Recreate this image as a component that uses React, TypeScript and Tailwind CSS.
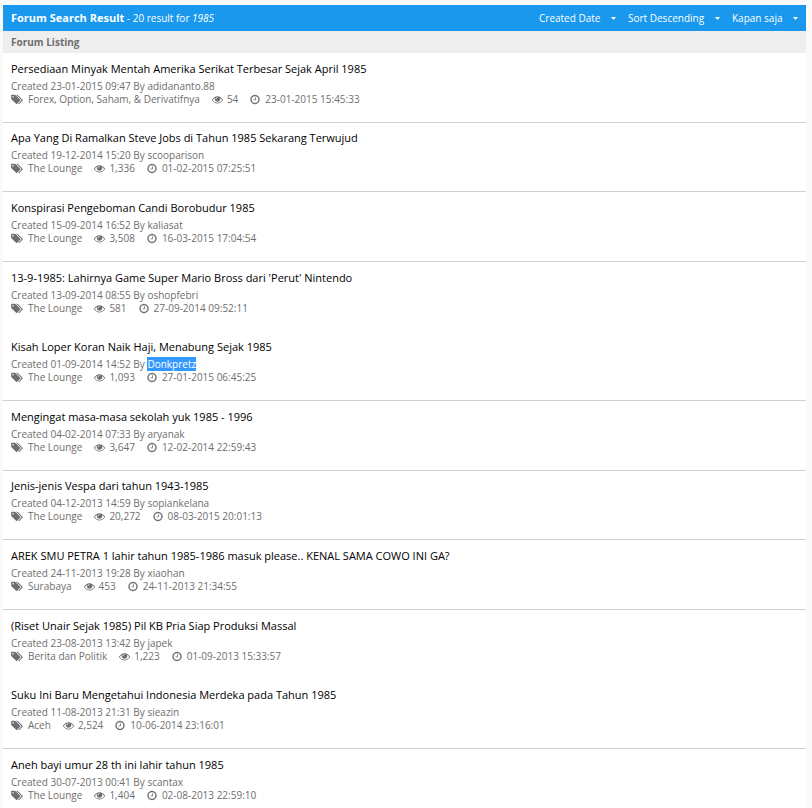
import { useState } from "react";

interface Thread {
  title: string;
  created: string;
  author: string;
  forum: string;
  views: string;
  lastPost: string;
}

const THREADS: Thread[] = [
  { title: "Persediaan Minyak Mentah Amerika Serikat Terbesar Sejak April 1985", created: "23-01-2015 09:47", author: "adidananto.88", forum: "Forex, Option, Saham, & Derivatifnya", views: "54", lastPost: "23-01-2015 15:45:33" },
  { title: "Apa Yang Di Ramalkan Steve Jobs di Tahun 1985 Sekarang Terwujud", created: "19-12-2014 15:20", author: "scooparison", forum: "The Lounge", views: "1,336", lastPost: "01-02-2015 07:25:51" },
  { title: "Konspirasi Pengeboman Candi Borobudur 1985", created: "15-09-2014 16:52", author: "kaliasat", forum: "The Lounge", views: "3,508", lastPost: "16-03-2015 17:04:54" },
  { title: "13-9-1985: Lahirnya Game Super Mario Bross dari 'Perut' Nintendo", created: "13-09-2014 08:55", author: "oshopfebri", forum: "The Lounge", views: "581", lastPost: "27-09-2014 09:52:11" },
  { title: "Kisah Loper Koran Naik Haji, Menabung Sejak 1985", created: "01-09-2014 14:52", author: "Donkpretz", forum: "The Lounge", views: "1,093", lastPost: "27-01-2015 06:45:25" },
  { title: "Mengingat masa-masa sekolah yuk 1985 - 1996", created: "04-02-2014 07:33", author: "aryanak", forum: "The Lounge", views: "3,647", lastPost: "12-02-2014 22:59:43" },
  { title: "Jenis-jenis Vespa dari tahun 1943-1985", created: "04-12-2013 14:59", author: "sopiankelana", forum: "The Lounge", views: "20,272", lastPost: "08-03-2015 20:01:13" },
  { title: "AREK SMU PETRA 1 lahir tahun 1985-1986 masuk please.. KENAL SAMA COWO INI GA?", created: "24-11-2013 19:28", author: "xiaohan", forum: "Surabaya", views: "453", lastPost: "24-11-2013 21:34:55" },
  { title: "(Riset Unair Sejak 1985) Pil KB Pria Siap Produksi Massal", created: "23-08-2013 13:42", author: "japek", forum: "Berita dan Politik", views: "1,223", lastPost: "01-09-2013 15:33:57" },
  { title: "Suku Ini Baru Mengetahui Indonesia Merdeka pada Tahun 1985", created: "11-08-2013 21:31", author: "sieazin", forum: "Aceh", views: "2,524", lastPost: "10-06-2014 23:16:01" },
  { title: "Aneh bayi umur 28 th ini lahir tahun 1985", created: "30-07-2013 00:41", author: "scantax", forum: "The Lounge", views: "1,404", lastPost: "02-08-2013 22:59:10" },
];

const HIGHLIGHTED_AUTHOR = "Donkpretz";
// threads that run into the next one without a rule
const NO_RULE = [3, 8];

function TagsIcon() {
  return (
    <svg viewBox="0 0 1920 1792" className="h-[11px] w-3 shrink-0" fill="currentColor" aria-hidden="true">
      <path
        transform="translate(0 1536) scale(1 -1)"
        d="M448 1088q0 53 -37.5 90.5t-90.5 37.5t-90.5 -37.5t-37.5 -90.5t37.5 -90.5t90.5 -37.5t90.5 37.5t37.5 90.5zM1515 512q0 -53 -37 -90l-491 -492q-39 -37 -91 -37q-53 0 -90 37l-715 716q-38 37 -64.5 101t-26.5 117v416q0 52 38 90t90 38h416q53 0 117 -26.5t102 -64.5l715 -714q37 -39 37 -91zM1899 512q0 -53 -37 -90l-491 -492q-39 -37 -91 -37q-36 0 -59 14t-53 45l470 470q37 37 37 90q0 52 -37 91l-715 714q-38 38 -102 64.5t-117 26.5h224q53 0 117 -26.5t102 -64.5l715 -714q37 -39 37 -91z"
      />
    </svg>
  );
}

function EyeIcon() {
  return (
    <svg viewBox="0 0 1792 1792" className="size-[11px] shrink-0" fill="currentColor" aria-hidden="true">
      <path
        transform="translate(0 1536) scale(1 -1)"
        d="M1664 576q-152 236 -381 353q61 -104 61 -225q0 -185 -131.5 -316.5t-316.5 -131.5t-316.5 131.5t-131.5 316.5q0 121 61 225q-229 -117 -381 -353q133 -205 333.5 -326.5t434.5 -121.5t434.5 121.5t333.5 326.5zM944 960q0 20 -14 34t-34 14q-125 0 -214.5 -89.5t-89.5 -214.5q0 -20 14 -34t34 -14t34 14t14 34q0 86 61 147t147 61q20 0 34 14t14 34zM1792 576q0 -34 -20 -69q-140 -230 -376.5 -368.5t-499.5 -138.5t-499.5 139t-376.5 368q-20 35 -20 69t20 69q140 229 376.5 368t499.5 139t499.5 -139t376.5 -368q20 -35 20 -69z"
      />
    </svg>
  );
}

function ClockIcon() {
  return (
    <svg viewBox="0 0 1536 1792" className="h-[11px] w-[10px] shrink-0" fill="currentColor" aria-hidden="true">
      <path
        transform="translate(0 1536) scale(1 -1)"
        d="M896 992v-448q0 -14 -9 -23t-23 -9h-320q-14 0 -23 9t-9 23v64q0 14 9 23t23 9h224v352q0 14 9 23t23 9h64q14 0 23 -9t9 -23zM1312 640q0 148 -73 273t-198 198t-273 73t-273 -73t-198 -198t-73 -273t73 -273t198 -198t273 -73t273 73t198 198t73 273zM1536 640q0 -209 -103 -385.5t-279.5 -279.5t-385.5 -103t-385.5 103t-279.5 279.5t-103 385.5t103 385.5t279.5 279.5t385.5 103t385.5 -103t279.5 -279.5t103 -385.5z"
      />
    </svg>
  );
}

function FilterSelect({ label, options }: { label: string; options: string[] }) {
  const [value, setValue] = useState(options[0]);

  return (
    <div className="flex items-center gap-2.5">
      <select
        aria-label={label}
        value={value}
        onChange={(e) => setValue(e.target.value)}
        className="cursor-pointer appearance-none bg-transparent text-[10px] leading-4 text-white focus:outline-none"
      >
        {options.map((option) => (
          <option key={option}>{option}</option>
        ))}
      </select>
      <svg viewBox="0 0 5 3" className="h-[3px] w-[5px]" fill="white" aria-hidden="true">
        <path d="M0 0h5L2.5 3z" />
      </svg>
    </div>
  );
}

function ThreadRow({ thread, ruled }: { thread: Thread; ruled: boolean }) {
  const highlighted = thread.author === HIGHLIGHTED_AUTHOR;

  return (
    <li
      className={
        ruled
          ? "border-b border-[#d0d0d0] px-2 pt-2 pb-4 nth-[5n+2]:pt-[7px]"
          : "px-2 pt-2 pb-4"
      }
    >
      <a href="#" className="block text-[11px] leading-4 text-black hover:underline">
        {thread.title}
      </a>
      <p className="pt-0.5 text-[10px] leading-[14px]">
        Created {thread.created} By{" "}
        <a href="#" className={highlighted ? "bg-[#3399ff] text-white" : "hover:underline"}>
          {thread.author}
        </a>
      </p>
      <div className="flex items-center text-[10px] leading-[13px]">
        <TagsIcon />
        <a href="#" className="ml-[5px] hover:underline">
          {thread.forum}
        </a>
        <span className="ml-3 flex items-center gap-1">
          <EyeIcon />
          {thread.views}
        </span>
        <span className="ml-3 flex items-center gap-[5px]">
          <ClockIcon />
          {thread.lastPost}
        </span>
      </div>
    </li>
  );
}

export default function App() {
  return (
    <div className="min-h-screen bg-[#fafafa] pt-[5px] pr-1.5 pl-[3px] font-['Open_Sans',sans-serif] text-[#6e6e6e]">
      <main className="bg-white">
        <header className="flex h-[26px] items-center justify-between bg-[#1998ed] px-2 text-white">
          <h1 className="text-[10px] leading-4">
            <strong className="text-[11px] font-bold">Forum Search Result</strong> - 20 result for <em>1985</em>
          </h1>
          <div className="flex items-center gap-3">
            <FilterSelect label="Sort by" options={["Created Date"]} />
            <FilterSelect label="Sort order" options={["Sort Descending"]} />
            <FilterSelect label="Time range" options={["Kapan saja"]} />
          </div>
        </header>
        <h2 className="bg-[#eeeeee] px-2 py-[3px] text-[10px] leading-4 font-bold">Forum Listing</h2>
        <ul>
          {THREADS.map((thread, i) => (
            <ThreadRow key={thread.title} thread={thread} ruled={!NO_RULE.includes(i)} />
          ))}
        </ul>
      </main>
    </div>
  );
}
